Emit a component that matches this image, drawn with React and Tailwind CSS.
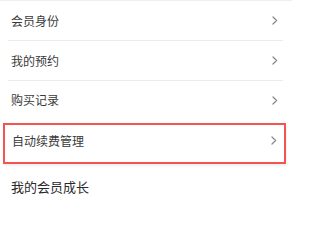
import React from "react";

const font = { fontFamily: '"Noto Sans CJK SC", "Noto Sans", sans-serif' };

function Chevron() {
  return (
    <svg width="6" height="9" viewBox="0 0 6 9" className="shrink-0">
      <path d="M1 1 L4.6 4.5 L1 8" fill="none" stroke="#8a8a8a" strokeWidth="1.3" strokeLinecap="round" strokeLinejoin="round" />
    </svg>
  );
}

function Row({ label }) {
  return (
    <div className="h-10 flex items-center border-b border-[#ececec] ml-2 mr-[17px]">
      <span className="pl-[3px] flex-1 text-[12px] text-[#3a3a3a] leading-none">{label}</span>
      <div className="mr-[5px] flex items-center">
        <Chevron />
      </div>
    </div>
  );
}

export default function App() {
  return (
    <div className="w-[300px] h-[200px] bg-white overflow-hidden" style={font}>
      <div className="h-px w-[292px] bg-[#efefef]" />
      <Row label="会员身份" />
      <Row label="我的预约" />
      <div className="h-10 flex items-center ml-2 mr-[17px]">
        <span className="pl-[3px] flex-1 text-[12px] text-[#3a3a3a] leading-none -mt-[2px]">购买记录</span>
        <div className="mr-[5px] flex items-center -mt-[2px]">
          <Chevron />
        </div>
      </div>
      <div className="mt-[2px] ml-[3px] w-[283px] h-[41px] border-2 border-[#f4544f] flex items-center pb-[6px] shadow-[1px_2px_2px_rgba(0,0,0,0.06)]">
        <span className="pl-[7px] flex-1 text-[12px] text-[#3a3a3a] leading-none">自动续费管理</span>
        <div className="mr-[7px] flex items-center">
          <Chevron />
        </div>
      </div>
      <div className="h-[44px] flex items-center pl-[11px]">
        <span className="text-[13px] text-[#2a2a2a] leading-none">我的会员成长</span>
      </div>
    </div>
  );
}
